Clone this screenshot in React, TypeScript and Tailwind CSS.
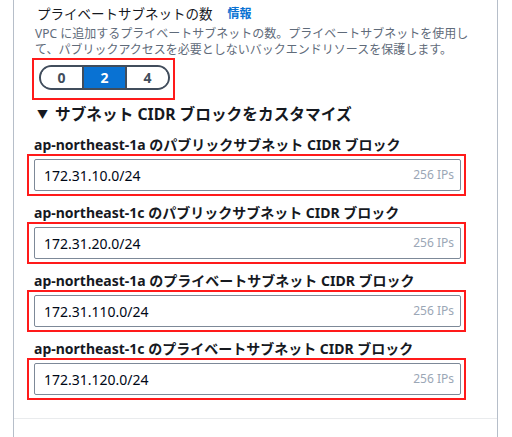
import React, { useState } from 'react';

const FONT = { fontFamily: '"Noto Sans", "Noto Sans CJK JP", sans-serif' };

const subnets = [
  { label: 'ap-northeast-1a のパブリックサブネット CIDR ブロック', cidr: '172.31.10.0/24' },
  { label: 'ap-northeast-1c のパブリックサブネット CIDR ブロック', cidr: '172.31.20.0/24' },
  { label: 'ap-northeast-1a のプライベートサブネット CIDR ブロック', cidr: '172.31.110.0/24' },
  { label: 'ap-northeast-1c のプライベートサブネット CIDR ブロック', cidr: '172.31.120.0/24' },
];

export default function App() {
  const [count, setCount] = useState(2);

  return (
    <div className="w-[512px] h-[437px] bg-white overflow-hidden" style={FONT}>
      <div className="ml-[13px] w-[485px] h-full border-x border-[#b6bec9] flex flex-col">
        <div className="pl-[20px] pr-[36px] pt-[4px] flex flex-col">
          {/* 見出し */}
          <div className="ml-[3px] flex items-center h-[20px]">
            <span className="text-[13.5px] leading-[20px] text-[#16191f]">プライベートサブネットの数</span>
            <span className="ml-[15px] text-[12px] font-bold text-[#0972d3] leading-[20px]">情報</span>
          </div>
          <p className="ml-px mt-[2px] w-[436px] text-[12px] leading-[16px] text-[#5f6b7a]">
            VPC に追加するプライベートサブネットの数。プライベートサブネットを使用して、パブリックアクセスを必要としないバックエンドリソースを保護します。
          </p>

          {/* セグメント */}
          <div className="ml-[-2px] w-[143px] h-[42px] border-2 border-[#ff1a1a] p-[5px]">
            <div className="flex h-[25px] w-[131px] rounded-full border-2 border-[#414d5c] overflow-hidden">
              {[0, 2, 4].map((n, i) => (
                <button
                  key={n}
                  onClick={() => setCount(n)}
                  className={`flex-1 flex items-center justify-center text-[14px] font-bold leading-none ${
                    i > 0 ? 'border-l-2 border-[#414d5c]' : ''
                  } ${count === n ? 'bg-[#0972d3] text-white' : 'bg-white text-[#414d5c]'}`}
                >
                  {n}
                </button>
              ))}
            </div>
          </div>

          {/* 展開セクション */}
          <div className="mt-[4px] ml-[3px] flex items-center h-[20px] text-[#16191f]">
            <span className="text-[11px] leading-none">▼</span>
            <span className="ml-[7px] text-[15.7px] font-bold leading-[20px]">サブネット CIDR ブロックをカスタマイズ</span>
          </div>

          <div className="mt-[11px] flex flex-col gap-[7px]">
            {subnets.map((s) => (
              <div key={s.cidr} className="flex flex-col">
                <div className="h-[19px] text-[14px] font-bold leading-[19px] text-[#16191f] whitespace-nowrap">{s.label}</div>
                <div className="ml-[-7px] w-[439px] border-2 border-[#ff1a1a] pl-[5px] pr-[3px] py-[3px]">
                  <div className="h-[32px] border border-[#7d8998] rounded-[2px] flex items-center justify-between pl-[9px] pr-[6px]">
                    <span className="text-[14px] text-[#000716]">{s.cidr}</span>
                    <span className="text-[12px] text-[#9ba7b6]">256 IPs</span>
                  </div>
                </div>
              </div>
            ))}
          </div>
        </div>
        <div className="mt-auto mb-[18px] border-t border-[#e9ebed]" />
      </div>
    </div>
  );
}
